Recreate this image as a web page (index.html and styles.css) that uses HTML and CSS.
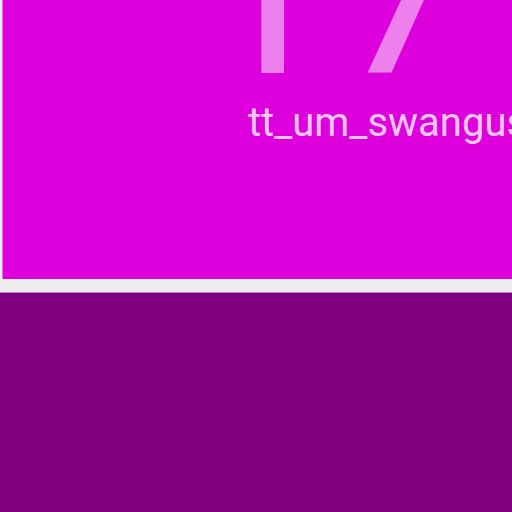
FILE: index.html
```html
<!DOCTYPE html>
<html>
<head>
<meta charset="utf-8">
<link rel="stylesheet" href="styles.css">
</head>
<body>
<div class="grid">
  <div class="card card-magenta">
    <div class="number">17</div>
    <div class="title">tt_um_swangust</div>
  </div>
  <div class="card card-purple"></div>
</div>
</body>
</html>
```
FILE: styles.css
```css
html, body {
  margin: 0;
  padding: 0;
  background: #eeeeee;
  overflow: hidden;
  width: 512px;
  height: 512px;
}
.grid {
  display: flex;
  flex-direction: column;
  gap: 13px;
  padding-left: 2px;
  width: 700px;
}
.card {
  box-sizing: border-box;
}
.card-magenta {
  background: #dd00dd;
  border-left: 1px solid #ee66ee;
  height: 279px;
  padding-left: 245px;
  font-family: Roboto, sans-serif;
  overflow: hidden;
}
.number {
  font-size: 250px;
  line-height: 1;
  height: 250px;
  margin-top: -137px;
  margin-left: -53px;
  color: rgba(255, 255, 255, 0.5);
  font-weight: 400;
  white-space: nowrap;
}
.title {
  font-size: 40px;
  line-height: 1;
  margin-top: -10px;
  color: rgba(255, 255, 255, 0.8);
  white-space: nowrap;
}
.card-purple {
  margin-left: -2px;
  background: #800080;
  border-top: 1px solid #c080c0;
  height: 300px;
}
```
